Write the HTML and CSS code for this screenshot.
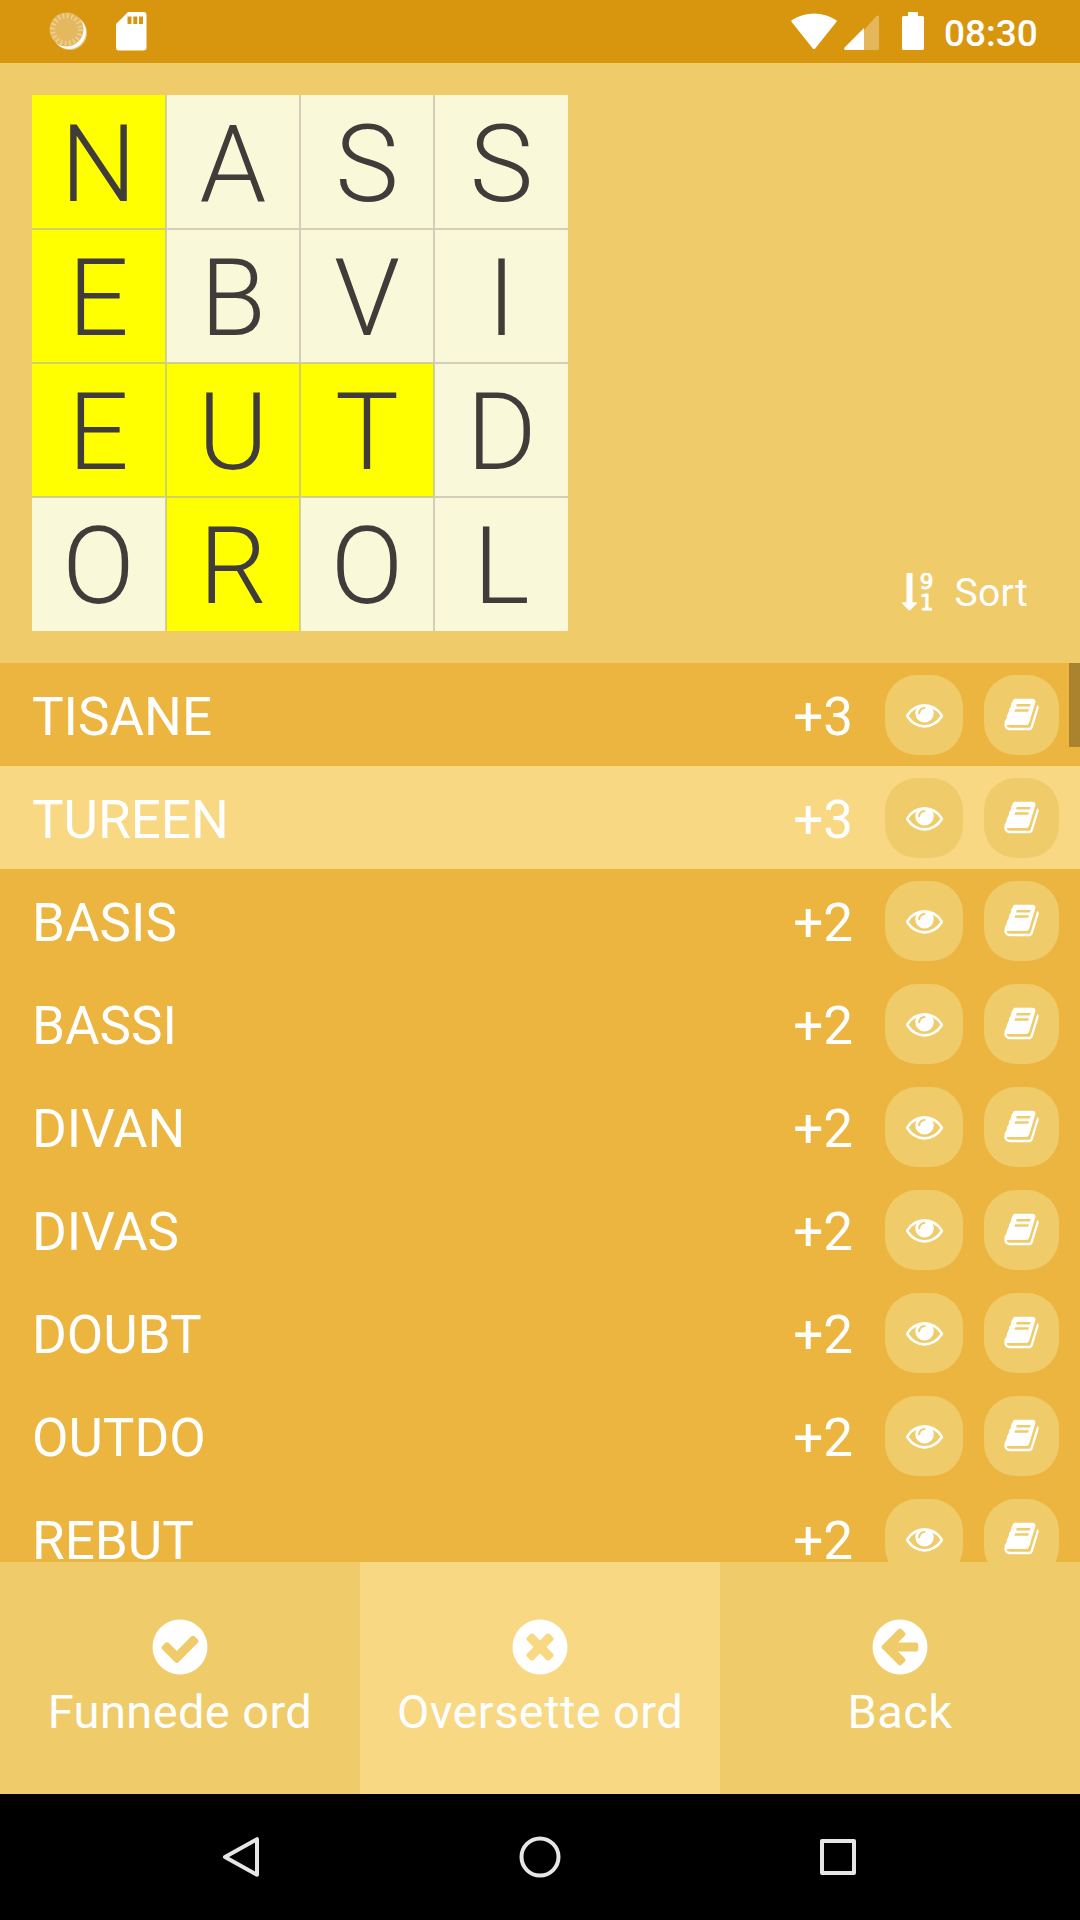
FILE: index.html
```html
<!DOCTYPE html>
<html lang="nb">
<head>
<meta charset="utf-8">
<title>Oversette ord</title>
<link rel="stylesheet" href="styles.css">
</head>
<body>
<svg class="sprite" aria-hidden="true">
  <symbol id="eye" viewBox="0 0 1792 1792"><path d="M1664 960q-152-236-381-353 61 104 61 225 0 185-131.500 316.500t-316.500 131.500-316.500-131.500-131.500-316.500q0-121 61-225-229 117-381 353 133 205 333.500 326.500t434.500 121.500 434.500-121.500 333.500-326.500zm-720-384q0-20-14-34t-34-14q-125 0-214.500 89.500t-89.500 214.500q0 20 14 34t34 14 34-14 14-34q0-86 61-147t147-61q20 0 34-14t14-34zm848 384q0 34-20 69-140 230-376.500 368.500t-499.500 138.500-499.500-139-376.500-368q-20-35-20-69t20-69q140-229 376.500-368t499.500-139 499.500 139 376.500 368q20 35 20 69z"/></symbol>
  <symbol id="book" viewBox="0 0 1792 1792"><path d="M1703 478q40 57 18 129l-275 906q-19 64-76.500 107.500t-122.500 43.500h-923q-77 0-148.500-53.500t-99.500-131.500q-24-67-2-127 0-4 3-27t4-37q1-8-3-21.500t-3-19.500q2-11 8-21t16.500-23.500 16.500-23.500q23-38 45-91.500t30-91.500q3-10 .5-30t-.5-28q3-11 17-28t17-23q21-36 42-92t25-90q1-9-2.500-32t.5-28q4-13 22-30.500t22-22.500q19-26 42.500-84.500t27.500-96.500q1-8-3-25.500t-2-26.500q2-8 9-18t18-23 17-21q8-12 16.500-30.500t15-35 16-36 19.500-32 26.500-23.500 36-11.500 47.500 5.500l-1 3q38-9 51-9h761q74 0 114 56t18 130l-274 906q-36 119-71.500 153.500t-128.500 34.500h-869q-27 0-38 15-11 16-1 43 24 70 144 70h923q29 0 56-15.500t35-41.500l300-987q7-22 5-57 38 15 59 43zm-1064 2q-4 13 2 22.500t20 9.500h608q13 0 25.500-9.500t16.500-22.500l21-64q4-13-2-22.500t-20-9.500h-608q-13 0-25.500 9.500t-16.500 22.500zm-83 256q-4 13 2 22.500t20 9.500h608q13 0 25.500-9.500t16.500-22.500l21-64q4-13-2-22.500t-20-9.500h-608q-13 0-25.500 9.500t-16.500 22.500z"/></symbol>
</svg>

<header class="status">
  <svg class="status-app" width="40" height="40" viewBox="0 0 40 40">
    <circle cx="22" cy="22" r="17" fill="#fff" fill-opacity=".45"/>
    <circle cx="21" cy="21" r="17" fill="#fff"/>
    <circle cx="18.500" cy="18.500" r="17" fill="#e4b85e"/>
    <circle cx="18.500" cy="18.500" r="13.800" fill="none" stroke="#edd096" stroke-width="5" stroke-dasharray="1.600 2.735"/>
  </svg>
  <svg class="status-sd" width="31" height="39" viewBox="0 0 31 39">
    <path fill="#fff" fill-rule="evenodd" d="M12 0h15.500q3 0 3 3v32.500q0 3-3 3h-24.500q-3 0-3-3V12zM11.500 4.500v7.500h4V4.500zM17.300 4.500v7.500h4V4.500zM23 4.500v7.500h4V4.500z"/>
  </svg>
  <span class="status-gap"></span>
  <svg class="status-wifi" width="46" height="37" viewBox="0 0 46 37"><path fill="#fff" d="M.7 9Q-.3 7.800 1 7 11 .4 23 .4T45 7q1.300.8.300 2L24.200 35.400q-1.200 1.200-2.400 0z"/></svg>
  <svg class="status-signal" width="36" height="36" viewBox="0 0 36 36"><path fill="#e4b85a" d="M20 15L32.500 1q2.500-1.500 2.500 1.500V33.500q0 1.500-1.500 1.500H20z"/><path fill="#fff" d="M20 13V35H1.500Q-.7 34.500.6 32.500z"/></svg>
  <svg class="status-battery" width="22" height="38" viewBox="0 0 22 38"><path fill="#fff" d="M6 0h10v4h4.500q1.500 0 1.500 1.500v31q0 1.500-1.500 1.500h-19q-1.500 0-1.500-1.500v-31Q0 4 1.500 4H6z"/></svg>
  <span class="clock">08:30</span>
</header>

<section class="top">
  <div class="board">
    <span class="cell on">N</span><span class="cell">A</span><span class="cell">S</span><span class="cell">S</span>
    <span class="cell on">E</span><span class="cell">B</span><span class="cell">V</span><span class="cell">I</span>
    <span class="cell on">E</span><span class="cell on">U</span><span class="cell on">T</span><span class="cell">D</span>
    <span class="cell">O</span><span class="cell on">R</span><span class="cell">O</span><span class="cell">L</span>
  </div>
  <div class="sort">
    <svg width="32" height="38" viewBox="0 0 32 38" fill="#fff">
      <path d="M4.500 .5q0-.5.500-.5h5q.5 0 .5.500V29.200h4q1 .3.300 1.200L8.200 37.200q-.7.600-1.400 0L.2 30.400q-.6-.9.400-1.200H4.500z"/>
      <text class="digit" x="17.800" y="16">9</text>
      <text class="digit" x="17.800" y="37.300">1</text>
    </svg>
    <span class="sort-label">Sort</span>
  </div>
</section>

<main class="list">
  <div class="row"><span class="word">TISANE</span><span class="score">+3</span><span class="btn eye"><svg><use href="#eye"/></svg></span><span class="btn book"><svg><use href="#book"/></svg></span></div>
  <div class="row selected"><span class="word">TUREEN</span><span class="score">+3</span><span class="btn eye"><svg><use href="#eye"/></svg></span><span class="btn book"><svg><use href="#book"/></svg></span></div>
  <div class="row"><span class="word">BASIS</span><span class="score">+2</span><span class="btn eye"><svg><use href="#eye"/></svg></span><span class="btn book"><svg><use href="#book"/></svg></span></div>
  <div class="row"><span class="word">BASSI</span><span class="score">+2</span><span class="btn eye"><svg><use href="#eye"/></svg></span><span class="btn book"><svg><use href="#book"/></svg></span></div>
  <div class="row"><span class="word">DIVAN</span><span class="score">+2</span><span class="btn eye"><svg><use href="#eye"/></svg></span><span class="btn book"><svg><use href="#book"/></svg></span></div>
  <div class="row"><span class="word">DIVAS</span><span class="score">+2</span><span class="btn eye"><svg><use href="#eye"/></svg></span><span class="btn book"><svg><use href="#book"/></svg></span></div>
  <div class="row"><span class="word">DOUBT</span><span class="score">+2</span><span class="btn eye"><svg><use href="#eye"/></svg></span><span class="btn book"><svg><use href="#book"/></svg></span></div>
  <div class="row"><span class="word">OUTDO</span><span class="score">+2</span><span class="btn eye"><svg><use href="#eye"/></svg></span><span class="btn book"><svg><use href="#book"/></svg></span></div>
  <div class="row"><span class="word">REBUT</span><span class="score">+2</span><span class="btn eye"><svg><use href="#eye"/></svg></span><span class="btn book"><svg><use href="#book"/></svg></span></div>
  <i class="scrollbar"></i>
</main>

<nav class="tabs">
  <div class="tab">
    <svg viewBox="0 0 1792 1792"><path d="M1412 734q0-28-18-46l-91-90q-19-19-45-19t-45 19l-408 407-226-226q-19-19-45-19t-45 19l-91 90q-18 18-18 46 0 27 18 45l362 362q19 19 45 19 27 0 46-19l543-543q18-18 18-45zm252 162q0 209-103 385.500t-279.500 279.500-385.500 103-385.500-103-279.500-279.500-103-385.500 103-385.500 279.500-279.500 385.500-103 385.500 103 279.500 279.500 103 385.500z"/></svg>
    <span>Funnede ord</span>
  </div>
  <div class="tab active">
    <svg viewBox="0 0 1792 1792"><path d="M1277 1122q0-26-19-45l-181-181 181-181q19-19 19-45 0-27-19-46l-90-90q-19-19-46-19-26 0-45 19l-181 181-181-181q-19-19-45-19-27 0-46 19l-90 90q-19 19-19 46 0 26 19 45l181 181-181 181q-19 19-19 45 0 27 19 46l90 90q19 19 46 19 26 0 45-19l181-181 181 181q19 19 45 19 27 0 46-19l90-90q19-19 19-46zm387-226q0 209-103 385.500t-279.500 279.500-385.500 103-385.500-103-279.500-279.500-103-385.500 103-385.500 279.500-279.500 385.500-103 385.500 103 279.500 279.500 103 385.500z"/></svg>
    <span>Oversette ord</span>
  </div>
  <div class="tab">
    <svg viewBox="0 0 1792 1792"><path d="M1408 960v-128q0-26-19-45t-45-19h-502l189-189q19-19 19-45t-19-45l-91-91q-18-18-45-18t-45 18l-362 362-91 91q-18 18-18 45t18 45l91 91 362 362q18 18 45 18t45-18l91-91q18-18 18-45t-18-45l-189-189h502q26 0 45-19t19-45zm256-64q0 209-103 385.500t-279.500 279.500-385.500 103-385.500-103-279.500-279.500-103-385.500 103-385.500 279.500-279.500 385.500-103 385.500 103 279.500 279.500 103 385.500z"/></svg>
    <span>Back</span>
  </div>
</nav>

<footer class="system">
  <svg width="44" height="44" viewBox="0 0 44 44"><path d="M37 4.200V39.800L5 22z"/></svg>
  <svg width="44" height="44" viewBox="0 0 44 44"><circle cx="22" cy="22" r="18.500"/></svg>
  <svg width="44" height="44" viewBox="0 0 44 44"><rect x="6" y="6" width="32" height="32"/></svg>
</footer>
</body>
</html>
```

FILE: styles.css
```css
* { box-sizing: border-box; }

body {
  margin: 0;
  width: 1080px;
  height: 1920px;
  display: flex;
  flex-direction: column;
  overflow: hidden;
  background: #efcb6a;
  color: #fff;
  font-family: Roboto, sans-serif;
}

svg { display: block; flex: none; }

.sprite { display: none; }

.status {
  height: 63px;
  flex: none;
  display: flex;
  align-items: flex-start;
  padding: 12px 43px 0 48px;
  background: #d8960e;
}

.status-app { margin-top: -1px; }
.status-sd { margin-left: 28px; }
.status-gap { flex: 1; }
.status-wifi { margin: 1px 7px 0 0; }
.status-signal { margin: 3px 22px 0 0; }
.status-battery { margin-right: 20px; }

.clock {
  width: 93px;
  font-size: 37px;
  font-weight: 500;
  line-height: 43px;
}

.top {
  height: 600px;
  flex: none;
  display: flex;
  align-items: flex-start;
  justify-content: space-between;
  padding: 32px 52px 0 32px;
}

.board {
  display: grid;
  grid-template-columns: repeat(4, 134px);
  grid-template-rows: repeat(4, 134px);
}

.cell {
  border: 0 solid rgba(184, 178, 165, .6);
  border-width: 1px;
  background: #f9f8d8;
  color: #3f3c3a;
  font-size: 107px;
  font-weight: 300;
  line-height: 138px;
  text-align: center;
}

.cell:nth-child(4n + 1) { border-left-width: 0; }
.cell:nth-child(4n) { border-right-width: 0; }
.cell:nth-child(-n + 4) { border-top-width: 0; line-height: 140px; }
.cell:nth-child(n + 13) { border-bottom-width: 0; }
.cell.on { background: #ff0; }

.sort {
  display: flex;
  align-items: center;
  gap: 20px;
  margin-top: 476px;
}

.sort-label {
  padding-top: 2px;
  font-size: 39px;
  line-height: 40px;
  letter-spacing: .3px;
}

.digit {
  font: 21.500px "DejaVu Sans", sans-serif;
  stroke: #fff;
  stroke-width: .9px;
}

.list {
  position: relative;
  height: 899px;
  flex: none;
  overflow: hidden;
  background: #ecb540;
}

.row {
  height: 103px;
  display: flex;
  align-items: center;
  padding: 0 21px 0 32px;
}

.row.selected { background: #f8d883; }

.word,
.score {
  padding-top: 6px;
  font-size: 53px;
  line-height: 97px;
}

.word { flex: 1; }

.score { margin-right: 32px; }

.btn {
  height: 80px;
  display: flex;
  align-items: center;
  justify-content: center;
  border-radius: 32px;
  background: #efcb6a;
}

.btn.eye { width: 78px; margin-right: 21px; }
.btn.book { width: 75px; }

.btn svg {
  width: 37px;
  height: 37px;
  fill: #fff;
}

.scrollbar {
  position: absolute;
  top: 0;
  right: 0;
  width: 11px;
  height: 84px;
  background: #ab832f;
}

.tabs {
  height: 232px;
  flex: none;
  display: grid;
  grid-template-columns: repeat(3, 1fr);
}

.tab {
  display: flex;
  flex-direction: column;
  align-items: center;
  padding-top: 53px;
  font-size: 47px;
  line-height: 54px;
  letter-spacing: .4px;
}

.tab.active { background: #f8d883; }

.tab svg {
  width: 64px;
  height: 64px;
  margin-bottom: 6px;
  fill: #fff;
}

.system {
  flex: 1;
  display: flex;
  align-items: center;
  justify-content: space-between;
  padding: 0 220px;
  background: #000;
}

.system svg {
  fill: none;
  stroke: #e6e6e6;
  stroke-width: 4px;
  stroke-linejoin: round;
}
```
